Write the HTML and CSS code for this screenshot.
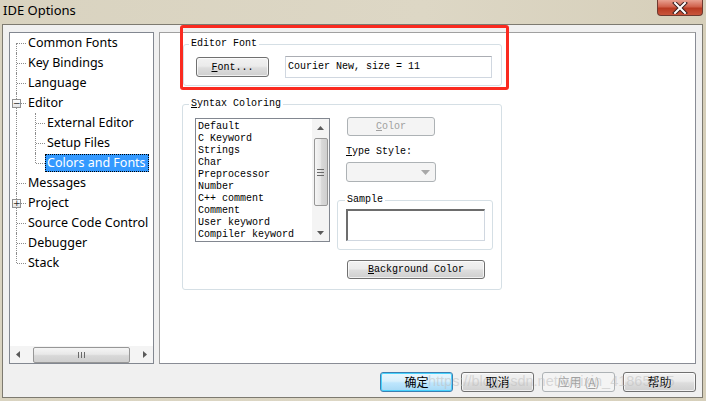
FILE: index.html
```html
<!DOCTYPE html>
<html>
<head>
<meta charset="utf-8">
<link rel="stylesheet" href="styles.css">
</head>
<body>
<div class="titlebar">
  <span class="title">IDE Options</span>
  <div class="close"><svg width="16" height="12" viewBox="0 0 16 12"><path d="M3 1 L13 11 M13 1 L3 11" stroke="#3a2020" stroke-width="4" stroke-linecap="square"/><path d="M3 1 L13 11 M13 1 L3 11" stroke="#fff" stroke-width="2" stroke-linecap="square"/></svg></div>
</div>
<div class="frame">
  <div class="main">
    <div class="tree">
      <div class="items">
        <div class="row first"><span class="g0"></span><span class="lbl">Common Fonts</span></div>
        <div class="row"><span class="g0"></span><span class="lbl">Key Bindings</span></div>
        <div class="row"><span class="g0"></span><span class="lbl">Language</span></div>
        <div class="row open"><span class="g0"><span class="box">&minus;</span></span><span class="lbl">Editor</span></div>
        <div class="row"><span class="g0 pass"></span><span class="g1"></span><span class="lbl">External Editor</span></div>
        <div class="row"><span class="g0 pass"></span><span class="g1"></span><span class="lbl">Setup Files</span></div>
        <div class="row"><span class="g0 pass"></span><span class="g1 last"></span><span class="lbl sel">Colors and Fonts</span></div>
        <div class="row"><span class="g0"></span><span class="lbl">Messages</span></div>
        <div class="row"><span class="g0"><span class="box">+</span></span><span class="lbl">Project</span></div>
        <div class="row"><span class="g0"></span><span class="lbl">Source Code Control</span></div>
        <div class="row"><span class="g0"></span><span class="lbl">Debugger</span></div>
        <div class="row last"><span class="g0"></span><span class="lbl">Stack</span></div>
      </div>
      <div class="hscroll">
        <span class="arr"><svg width="4" height="7" viewBox="0 0 4 7"><path d="M4 0 L0 3.5 L4 7Z" fill="#5a5a5a"/></svg></span>
        <span class="hthumb"><span class="grip"></span></span>
        <span class="arr"><svg width="4" height="7" viewBox="0 0 4 7"><path d="M0 0 L4 3.5 L0 7Z" fill="#5a5a5a"/></svg></span>
      </div>
    </div>
    <div class="panel">
      <fieldset class="grp editor">
        <legend>Editor Font</legend>
        <div class="efrow">
          <button class="btn fontbtn"><u>F</u>ont...</button>
          <div class="field">Courier New, size = 11</div>
        </div>
      </fieldset>
      <fieldset class="grp syntax">
        <legend><u>S</u>yntax Coloring</legend>
        <div class="synrow">
          <div class="listbox">
            <div class="litems">
              <div>Default</div><div>C Keyword</div><div>Strings</div><div>Char</div><div>Preprocessor</div><div>Number</div><div>C++ comment</div><div>Comment</div><div>User keyword</div><div>Compiler keyword</div>
            </div>
            <div class="vscroll">
              <span class="varr"><svg width="7" height="4" viewBox="0 0 7 4"><path d="M0 4 L3.5 0 L7 4Z" fill="#5a5a5a"/></svg></span>
              <span class="vthumb"><span class="vgrip"></span></span>
              <span class="vspace"></span>
              <span class="varr"><svg width="7" height="4" viewBox="0 0 7 4"><path d="M0 0 L3.5 4 L7 0Z" fill="#5a5a5a"/></svg></span>
            </div>
          </div>
          <div class="rcol">
            <button class="btn dis colorbtn"><u>C</u>olor</button>
            <div class="tslabel"><u>T</u>ype Style:</div>
            <div class="combo"><svg width="9" height="5" viewBox="0 0 9 5"><path d="M0 0 L9 0 L4.5 5Z" fill="#a8a8a8"/></svg></div>
            <fieldset class="grp sample">
              <legend>Sample</legend>
              <div class="samplebox"></div>
            </fieldset>
            <button class="btn bgbtn"><u>B</u>ackground Color</button>
          </div>
        </div>
      </fieldset>
    </div>
  </div>
  <div class="buttons">
    <button class="dbtn def">确定</button>
    <button class="dbtn">取消</button>
    <button class="dbtn dis">应用 (<u>A</u>)</button>
    <button class="dbtn">帮助</button>
  </div>
</div>
<div class="highlight"></div>
<div class="watermark">https://blog.csdn.net/weixin_41865025</div>
</body>
</html>
```

FILE: styles.css
```css
html, body {
  margin: 0;
  padding: 0;
}
body {
  width: 706px;
  height: 401px;
  background: linear-gradient(90deg, #d9d3c0, #ddd7c5 60%, #d6cfba);
  font-family: "Noto Sans", "Noto Sans CJK SC", sans-serif;
  position: relative;
  overflow: hidden;
}
.titlebar {
  height: 24px;
  display: flex;
  align-items: flex-start;
  justify-content: space-between;
}
.title {
  font-size: 13px;
  color: #000;
  margin: 1px 0 0 3px;
  line-height: 18px;
}
.close {
  width: 44px;
  height: 15px;
  margin-right: 3px;
  border: 1px solid #6e3a30;
  border-top: none;
  border-radius: 0 0 4px 4px;
  background: linear-gradient(#e8a090, #d0614c 45%, #b83a22 55%, #c9553c);
  display: flex;
  align-items: center;
  justify-content: center;
}
.frame {
  margin: 0 3px 0 2px;
  border: 1px solid #7d7a70;
  background: #f0f0f0;
  padding: 7px 6px 0 6px;
  box-sizing: content-box;
  height: 365px;
}
.main {
  display: flex;
  gap: 5px;
  height: 332px;
}
.tree {
  width: 145px;
  box-sizing: border-box;
  border: 1px solid #828790;
  background: #fff;
  display: flex;
  flex-direction: column;
}
.items {
  flex: 1;
  font-size: 12.5px;
  color: #000;
}
.row {
  height: 20px;
  display: flex;
  align-items: center;
  white-space: nowrap;
}
.g0, .g1 {
  position: relative;
  height: 20px;
  flex: none;
}
.g0 { width: 16px; }
.g1 { width: 19px; }
.g0::before, .g1::before {
  content: "";
  position: absolute;
  top: 0;
  bottom: 0;
  border-left: 1px dotted #8c8c8c;
}
.g0::before { left: 6px; }
.g1::before { left: 9px; }
.g0::after, .g1::after {
  content: "";
  position: absolute;
  top: 10px;
  width: 9px;
  border-top: 1px dotted #8c8c8c;
}
.g0::after { left: 7px; }
.g1::after { left: 10px; }
.g0.pass::after { display: none; }
.row.first .g0::before { top: 10px; }
.row.last .g0::before { bottom: 10px; }
.g1.last::before { bottom: 10px; }
.box {
  position: absolute;
  left: 2px;
  top: 6px;
  width: 7px;
  height: 7px;
  border: 1px solid #919191;
  background: linear-gradient(#fff, #e4e4e4);
  z-index: 1;
  font-size: 9px;
  line-height: 7px;
  text-align: center;
  color: #2a2a2a;
  font-family: "DejaVu Sans", sans-serif;
}
.lbl {
  padding: 0 2px;
  line-height: 18px;
}
.lbl.sel {
  background: #3399ff;
  color: #fff;
  outline: 1px dotted #000;
  outline-offset: -1px;
  padding: 0 3px 0 2px;
}
.hscroll {
  height: 17px;
  display: flex;
  align-items: center;
  background: #f4f4f4;
}
.arr {
  width: 17px;
  height: 17px;
  display: flex;
  align-items: center;
  justify-content: center;
}
.hthumb {
  width: 99px;
  height: 14px;
  margin: 0 7px 0 7px;
  border: 1px solid #979797;
  border-radius: 2px;
  background: linear-gradient(#f5f5f5, #e8e8e8 45%, #d8d8d8 55%, #cfcfcf);
  display: flex;
  align-items: center;
  justify-content: center;
}
.grip {
  width: 7px;
  height: 6px;
  background: repeating-linear-gradient(90deg, #6a6a6a 0 1px, transparent 1px 3px);
}
.panel {
  width: 537px;
  box-sizing: border-box;
  border: 1px solid #a0a0a0;
  border-right-color: #898c95;
  border-bottom-color: #898c95;
  background: #fff;
  padding: 4px 0 0 0;
}
.grp {
  border: 1px solid #d5dfe5;
  border-radius: 3px;
  margin: 0;
  padding: 0;
  font-family: "Liberation Mono", monospace;
  font-size: 10px;
  color: #000;
}
.grp legend {
  padding: 0 2px;
  line-height: 12px;
  height: 12px;
}
.editor {
  margin-left: 23px;
  margin-top: 1px;
  width: 319px;
  box-sizing: border-box;
  padding: 6px 8px 7px 12px;
}
.editor legend { margin-left: -7px; }
.efrow {
  display: flex;
  align-items: center;
  gap: 16px;
}
.btn {
  font-family: "Liberation Mono", monospace;
  font-size: 10px;
  color: #000;
  border: 1px solid #707070;
  border-radius: 3px;
  background: linear-gradient(#f2f2f2, #ebebeb 45%, #dddddd 55%, #cfcfcf);
  padding: 0;
  height: 20px;
  box-shadow: inset 0 0 0 1px rgba(255,255,255,0.7);
}
.fontbtn { width: 73px; }
.field {
  width: 207px;
  height: 22px;
  box-sizing: border-box;
  border: 1px solid #d0d7e0;
  border-top-color: #abadb3;
  padding: 0 2px;
  line-height: 20px;
  white-space: nowrap;
}
.syntax {
  margin-left: 22px;
  margin-top: 12px;
  width: 320px;
  box-sizing: border-box;
  padding: 7px 8px 10px 12px;
}
.syntax legend { margin-left: -6px; }
.synrow {
  display: flex;
  gap: 7px;
}
.listbox {
  margin-top: 1px;
  width: 135px;
  height: 124px;
  box-sizing: border-box;
  border: 1px solid #828790;
  display: flex;
}
.litems {
  flex: 1;
  padding: 2px 0 0 2px;
  line-height: 12px;
  white-space: nowrap;
  overflow: hidden;
}
.vscroll {
  width: 17px;
  display: flex;
  flex-direction: column;
  align-items: center;
  background: #f4f4f4;
}
.varr {
  height: 17px;
  width: 17px;
  display: flex;
  align-items: center;
  justify-content: center;
  flex: none;
}
.vthumb {
  margin-top: 2px;
  width: 14px;
  height: 68px;
  box-sizing: border-box;
  border: 1px solid #979797;
  border-radius: 2px;
  background: linear-gradient(90deg, #f5f5f5, #e8e8e8 45%, #d8d8d8 55%, #cfcfcf);
  display: flex;
  align-items: center;
  justify-content: center;
}
.vgrip {
  width: 7px;
  height: 7px;
  background: repeating-linear-gradient(180deg, #6a6a6a 0 1px, transparent 1px 3px);
}
.vspace { flex: 1; }
.rcol {
  width: 156px;
  display: flex;
  flex-direction: column;
  align-items: flex-start;
}
.btn.dis {
  color: #a0a0a0;
  border-color: #adb2b5;
  background: #f4f4f4;
  box-shadow: none;
}
.colorbtn {
  margin-left: 10px;
  width: 88px;
  height: 19px;
}
.tslabel {
  margin: 10px 0 0 9px;
  line-height: 12px;
}
.combo {
  margin: 4px 0 0 9px;
  width: 90px;
  height: 20px;
  box-sizing: border-box;
  border: 1px solid #adb2b5;
  border-radius: 3px;
  background: #f4f4f4;
  display: flex;
  align-items: center;
  justify-content: flex-end;
  padding-right: 5px;
}
.sample {
  margin-top: 12px;
  width: 156px;
  box-sizing: border-box;
  padding: 3px 7px 8px 8px;
}
.sample legend { margin-left: -1px; }
.samplebox {
  width: 139px;
  height: 32px;
  box-sizing: border-box;
  border: 1px solid #d0d7e0;
  border-top: 2px solid #6d6d6d;
  border-left: 2px solid #6d6d6d;
}
.bgbtn {
  margin: 10px 0 0 10px;
  width: 138px;
  height: 19px;
}
.buttons {
  display: flex;
  justify-content: flex-end;
  gap: 8px;
  margin-top: 8px;
}
.dbtn {
  width: 73px;
  height: 20px;
  padding: 0;
  font-family: "Noto Sans CJK SC", sans-serif;
  font-size: 12px;
  line-height: 18px;
  color: #000;
  border: 1px solid #707070;
  border-radius: 3px;
  background: linear-gradient(#f2f2f2, #ebebeb 45%, #dddddd 55%, #cfcfcf);
  box-shadow: inset 0 0 0 1px rgba(255,255,255,0.7);
}
.dbtn.def {
  border-color: #3c7fb1;
  background: linear-gradient(#eaf6fd, #d9f0fc 45%, #bee6fd 55%, #a7d9f5);
  box-shadow: inset 0 0 0 1px #48d2fd;
}
.dbtn.dis {
  color: #a0a0a0;
  border-color: #adb2b5;
  background: #f4f4f4;
  box-shadow: none;
}
.highlight {
  position: absolute;
  left: 180px;
  top: 25px;
  width: 329px;
  height: 65px;
  box-sizing: border-box;
  border: 3px solid #fa2a20;
  border-radius: 3px;
  pointer-events: none;
}
.watermark {
  position: absolute;
  left: 428px;
  top: 372px;
  font-family: "Liberation Sans", sans-serif;
  font-size: 14.5px;
  line-height: 18px;
  color: rgba(190, 190, 190, 0.55);
  white-space: nowrap;
  pointer-events: none;
}
```
